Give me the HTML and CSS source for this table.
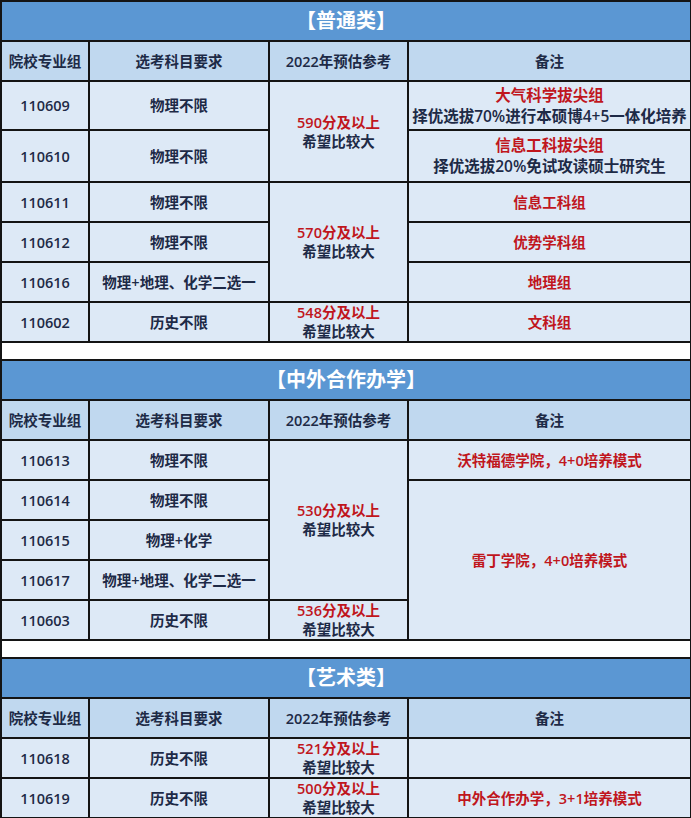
FILE: index.html
```html
<!DOCTYPE html>
<html lang="zh-CN">
<head>
<meta charset="utf-8">
<title>录取参考</title>
<link rel="stylesheet" href="styles.css">
</head>
<body>
<table class="grid">
  <colgroup>
    <col class="c1"><col class="c2"><col class="c3"><col class="c4">
  </colgroup>
  <tbody>
    <tr class="title"><td colspan="4">【普通类】</td></tr>
    <tr class="head"><td>院校专业组</td><td>选考科目要求</td><td>2022年预估参考</td><td>备注</td></tr>
    <tr class="r49"><td>110609</td><td>物理不限</td>
      <td rowspan="2"><span class="red">590分及以上</span><br>希望比较大</td>
      <td class="note"><span class="red">大气科学拔尖组</span><br>择优选拔70%进行本硕博4+5一体化培养</td></tr>
    <tr class="r52"><td>110610</td><td>物理不限</td>
      <td class="note"><span class="red">信息工科拔尖组</span><br>择优选拔20%免试攻读硕士研究生</td></tr>
    <tr class="r40"><td>110611</td><td>物理不限</td>
      <td rowspan="3"><span class="red">570分及以上</span><br>希望比较大</td>
      <td class="red">信息工科组</td></tr>
    <tr class="r40"><td>110612</td><td>物理不限</td><td class="red">优势学科组</td></tr>
    <tr class="r40"><td>110616</td><td>物理+地理、化学二选一</td><td class="red">地理组</td></tr>
    <tr class="r40"><td>110602</td><td>历史不限</td>
      <td><span class="red">548分及以上</span><br>希望比较大</td>
      <td class="red">文科组</td></tr>
    <tr class="gap"><td colspan="4"></td></tr>

    <tr class="title"><td colspan="4">【中外合作办学】</td></tr>
    <tr class="head"><td>院校专业组</td><td>选考科目要求</td><td>2022年预估参考</td><td>备注</td></tr>
    <tr class="r40"><td>110613</td><td>物理不限</td>
      <td rowspan="4"><span class="red">530分及以上</span><br>希望比较大</td>
      <td class="red">沃特福德学院，4+0培养模式</td></tr>
    <tr class="r40"><td>110614</td><td>物理不限</td>
      <td rowspan="4" class="red">雷丁学院，4+0培养模式</td></tr>
    <tr class="r40"><td>110615</td><td>物理+化学</td></tr>
    <tr class="r40"><td>110617</td><td>物理+地理、化学二选一</td></tr>
    <tr class="r40"><td>110603</td><td>历史不限</td>
      <td><span class="red">536分及以上</span><br>希望比较大</td></tr>
    <tr class="gap"><td colspan="4"></td></tr>

    <tr class="title"><td colspan="4">【艺术类】</td></tr>
    <tr class="head"><td>院校专业组</td><td>选考科目要求</td><td>2022年预估参考</td><td>备注</td></tr>
    <tr class="r40"><td>110618</td><td>历史不限</td>
      <td><span class="red">521分及以上</span><br>希望比较大</td>
      <td></td></tr>
    <tr class="r40"><td>110619</td><td>历史不限</td>
      <td><span class="red">500分及以上</span><br>希望比较大</td>
      <td class="red">中外合作办学，3+1培养模式</td></tr>
  </tbody>
</table>
</body>
</html>
```

FILE: styles.css
```css
html, body {
  margin: 0;
  padding: 0;
  background: #ffffff;
}

.grid {
  border-collapse: collapse;
  width: 690px;
  table-layout: fixed;
  font-family: "Open Sans", "Noto Sans CJK SC", sans-serif;
  font-weight: 600;
  font-size: 14.5px;
  color: #1d2a46;
}

.c1 { width: 88px; }
.c2 { width: 180px; }
.c3 { width: 139px; }
.c4 { width: 283px; }

.grid td {
  border: 2px solid #141414;
  background: #dde9f6;
  text-align: center;
  vertical-align: middle;
  padding: 0;
  line-height: 19px;
}

.grid .note {
  font-size: 15.5px;
  line-height: 21px;
}

.red {
  color: #c0161d;
}

.title td {
  height: 38px;
  background: #5b97d3;
  color: #ffffff;
  font-size: 20px;
  line-height: 24px;
}

.head td {
  height: 38px;
  background: #c0d8ef;
}

.r40 td { height: 38px; }
.r49 { height: 49px; }
.r52 { height: 52px; }

.gap td {
  height: 16px;
  background: #ffffff;
}
```
